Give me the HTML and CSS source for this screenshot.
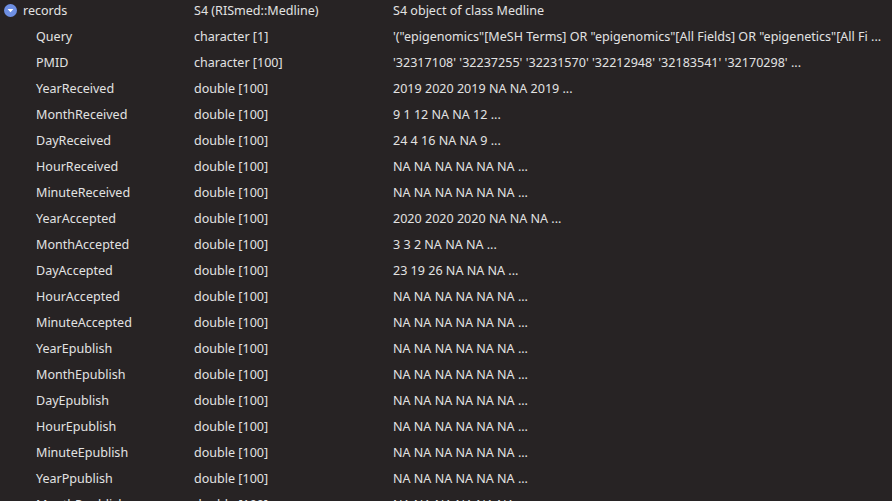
FILE: index.html
```html
<!DOCTYPE html>
<html>
<head>
<meta charset="utf-8">
<link rel="stylesheet" href="styles.css">
</head>
<body>
<div class="env">
  <div class="row parent">
    <div class="name"><span class="toggle"><svg width="13" height="13" viewBox="0 0 13 13"><circle cx="6.5" cy="6.5" r="6.5" fill="#6e8fe3"/><path d="M3.6 5 L9.4 5 L6.5 8.2 Z" fill="#fff"/></svg></span>records</div>
    <div class="type">S4 (RISmed::Medline)</div>
    <div class="value">S4 object of class Medline</div>
  </div>
  <div class="row child"><div class="name">Query</div><div class="type">character [1]</div><div class="value">'("epigenomics"[MeSH Terms] OR "epigenomics"[All Fields] OR "epigenetics"[All Fi ...</div></div>
  <div class="row child"><div class="name">PMID</div><div class="type">character [100]</div><div class="value">'32317108' '32237255' '32231570' '32212948' '32183541' '32170298' ...</div></div>
  <div class="row child"><div class="name">YearReceived</div><div class="type">double [100]</div><div class="value">2019 2020 2019 NA NA 2019 ...</div></div>
  <div class="row child"><div class="name">MonthReceived</div><div class="type">double [100]</div><div class="value">9 1 12 NA NA 12 ...</div></div>
  <div class="row child"><div class="name">DayReceived</div><div class="type">double [100]</div><div class="value">24 4 16 NA NA 9 ...</div></div>
  <div class="row child"><div class="name">HourReceived</div><div class="type">double [100]</div><div class="value">NA NA NA NA NA NA ...</div></div>
  <div class="row child"><div class="name">MinuteReceived</div><div class="type">double [100]</div><div class="value">NA NA NA NA NA NA ...</div></div>
  <div class="row child"><div class="name">YearAccepted</div><div class="type">double [100]</div><div class="value">2020 2020 2020 NA NA NA ...</div></div>
  <div class="row child"><div class="name">MonthAccepted</div><div class="type">double [100]</div><div class="value">3 3 2 NA NA NA ...</div></div>
  <div class="row child"><div class="name">DayAccepted</div><div class="type">double [100]</div><div class="value">23 19 26 NA NA NA ...</div></div>
  <div class="row child"><div class="name">HourAccepted</div><div class="type">double [100]</div><div class="value">NA NA NA NA NA NA ...</div></div>
  <div class="row child"><div class="name">MinuteAccepted</div><div class="type">double [100]</div><div class="value">NA NA NA NA NA NA ...</div></div>
  <div class="row child"><div class="name">YearEpublish</div><div class="type">double [100]</div><div class="value">NA NA NA NA NA NA ...</div></div>
  <div class="row child"><div class="name">MonthEpublish</div><div class="type">double [100]</div><div class="value">NA NA NA NA NA NA ...</div></div>
  <div class="row child"><div class="name">DayEpublish</div><div class="type">double [100]</div><div class="value">NA NA NA NA NA NA ...</div></div>
  <div class="row child"><div class="name">HourEpublish</div><div class="type">double [100]</div><div class="value">NA NA NA NA NA NA ...</div></div>
  <div class="row child"><div class="name">MinuteEpublish</div><div class="type">double [100]</div><div class="value">NA NA NA NA NA NA ...</div></div>
  <div class="row child"><div class="name">YearPpublish</div><div class="type">double [100]</div><div class="value">NA NA NA NA NA NA ...</div></div>
  <div class="row child"><div class="name">MonthPpublish</div><div class="type">double [100]</div><div class="value">NA NA NA NA NA NA ...</div></div>
</div>
</body>
</html>
```

FILE: styles.css
```css
html, body {
  margin: 0;
  padding: 0;
  background: #272324;
  overflow: hidden;
  height: 501px;
}
.env {
  margin-top: -3px;
  font-family: "Noto Sans", "Open Sans", sans-serif;
  font-size: 12.55px;
  color: #e2e2e2;
}
.row {
  display: grid;
  grid-template-columns: 194px 199px 1fr;
  height: 26px;
  align-items: center;
  white-space: nowrap;
}
.name {
  display: flex;
  align-items: center;
}
.parent .name {
  padding-left: 4px;
}
.toggle {
  display: inline-flex;
  width: 13px;
  height: 13px;
  margin-right: 6px;
}
.child .name {
  padding-left: 36px;
}
.value {
  overflow: hidden;
}
```
